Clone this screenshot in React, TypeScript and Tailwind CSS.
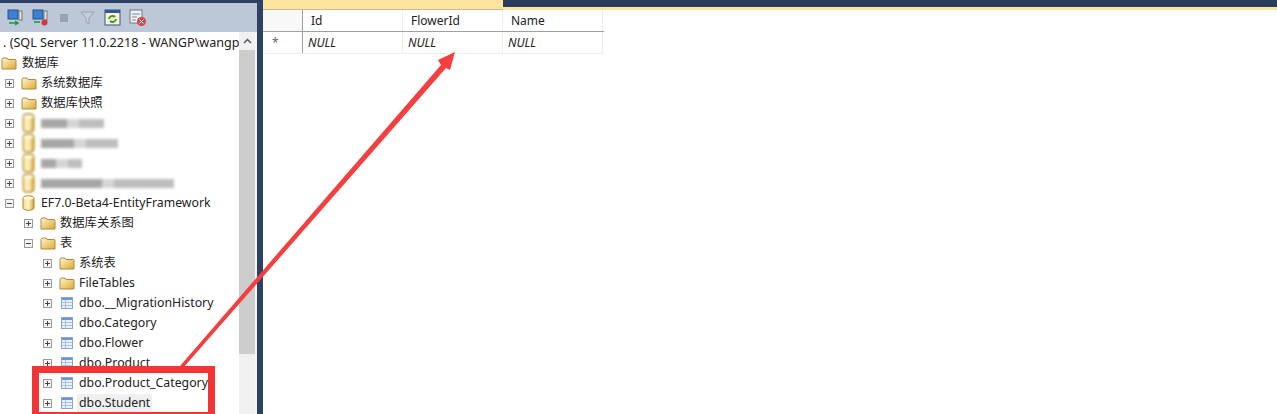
import React from 'react';

const font = { fontFamily: '"Noto Sans", "Noto Sans CJK SC", sans-serif' };

const Box = ({ open }: { open?: boolean }) => (
  <svg width="9" height="9" viewBox="0 0 9 9" className="shrink-0">
    <rect x="0.5" y="0.5" width="8" height="8" fill="#f4f4f4" stroke="#9a9a9a" />
    <path d={open ? 'M2 4.5h5' : 'M2 4.5h5M4.5 2v5'} stroke="#444" />
  </svg>
);

const Folder = () => (
  <svg width="16" height="13" viewBox="0 0 16 13" className="shrink-0">
    <defs>
      <linearGradient id="fold" x1="0" y1="0" x2="1" y2="1">
        <stop offset="0" stopColor="#fff6d2" />
        <stop offset="1" stopColor="#dfa92c" />
      </linearGradient>
    </defs>
    <path d="M1 2.5 2 1h4l1 1.5h7.500a1 1 0 0 1 .5 1V12H1z" fill="url(#fold)" stroke="#a98b47" />
  </svg>
);

const Db = ({ blur }: { blur?: boolean }) => (
  <svg width="13" height="16" viewBox="0 0 13 16" className={blur ? 'shrink-0 scale-y-125 blur-[1px]' : 'shrink-0'}>
    <defs>
      <linearGradient id="dbg" x1="0" y1="0" x2="1" y2="0">
        <stop offset="0" stopColor="#f7dc8f" />
        <stop offset="0.5" stopColor="#fff3c8" />
        <stop offset="1" stopColor="#d9a32c" />
      </linearGradient>
    </defs>
    <path d="M1 3c0-3 11-3 11 0v10c0 3-11 3-11 0z" fill="url(#dbg)" stroke="#a8872f" />
    <ellipse cx="6.500" cy="3" rx="5" ry="1.500" fill="#fff8dc" />
  </svg>
);

const TableIcon = () => (
  <svg width="12" height="12" viewBox="0 0 12 12" className="shrink-0">
    <rect x="0.500" y="0.500" width="11" height="11" fill="#eaf1fa" stroke="#8aa6cc" />
    <rect x="1" y="1" width="10" height="2" fill="#6f95cb" />
    <path d="M1 5.500h10M1 8.500h10M4.500 3v8" stroke="#a9c2e2" />
  </svg>
);

const Row = ({ depth, open, selected, icon, children }: { depth: number; open?: boolean; selected?: boolean; icon: React.ReactNode; children: React.ReactNode }) => (
  <div className="flex h-5 items-center">
    <div className={depth === 1 ? 'w-[5px]' : depth === 2 ? 'w-[24px]' : 'w-[43px]'} />
    <Box open={open} />
    <div className="ml-[6px] flex w-[17px] justify-center">{icon}</div>
    <div className={selected ? 'ml-[2px] whitespace-nowrap bg-[#f0f0f0] px-[2px] text-[12.300px] text-[#222]' : 'ml-[4px] whitespace-nowrap text-[12.300px] text-[#222]'}>{children}</div>
  </div>
);

const Smear = ({ w }: { w: number }) => (
  <div className="flex blur-[1.500px]" style={{ width: w }}>
    <div className="h-[9px] flex-1 bg-[#a6a6a6]" />
    <div className="h-[9px] w-3 bg-[#d6d6d6]" />
    <div className="h-[9px] flex-1 bg-[#bdbdbd]" />
  </div>
);

const Toolbar = () => (
  <div className="flex h-[29px] items-center gap-[8px] bg-[#bcc7d8] pl-[7px]">
    <svg width="17" height="17" viewBox="0 0 17 17">
      <rect x="1" y="1" width="10" height="9" fill="#3d7fd0" stroke="#23568f" />
      <rect x="12" y="2" width="3" height="9" fill="#e6e6e6" stroke="#777" />
      <path d="M2 14h9M8 12l3 2-3 2" stroke="#1d9a3a" strokeWidth="1.500" fill="none" />
    </svg>
    <svg width="17" height="17" viewBox="0 0 17 17">
      <rect x="1" y="1" width="10" height="9" fill="#3d7fd0" stroke="#23568f" />
      <rect x="12" y="2" width="3" height="9" fill="#e6e6e6" stroke="#777" />
      <path d="M2 13h6" stroke="#1d9a3a" strokeWidth="1.500" />
      <circle cx="12.500" cy="13.500" r="3" fill="#d8333a" />
    </svg>
    <div className="ml-[3px] h-[8px] w-[8px] bg-[#98a2af]" />
    <svg width="17" height="17" viewBox="0 0 17 17" className="ml-[3px]">
      <path d="M2 3h13l-5 6v6l-3-2V9z" fill="#c7ced8" stroke="#98a2af" />
    </svg>
    <svg width="17" height="17" viewBox="0 0 17 17">
      <rect x="1" y="1" width="15" height="15" fill="#f6f3d8" stroke="#34578c" />
      <rect x="1" y="1" width="15" height="3" fill="#34578c" />
      <path d="M5 10a3.500 3.500 0 0 1 6-2M12 10a3.500 3.500 0 0 1-6 2" stroke="#3f9a22" strokeWidth="2" fill="none" />
    </svg>
    <svg width="18" height="18" viewBox="0 0 18 18">
      <rect x="1" y="1" width="12" height="13" fill="#eef1f5" stroke="#6f7a88" />
      <path d="M3 5h8M3 8h5M3 11h4" stroke="#7d8896" />
      <circle cx="12.500" cy="12.500" r="4.500" fill="#d9434a" />
      <path d="M10.500 10.500l4 4M14.500 10.500l-4 4" stroke="#fff" />
    </svg>
  </div>
);

const Scrollbar = () => (
  <div className="flex w-4 shrink-0 flex-col bg-[#f0f0f0]">
    <div className="flex h-[18px] items-center justify-center">
      <svg width="9" height="6" viewBox="0 0 9 6">
        <path d="M1 5l3.500-3.500L8 5" stroke="#555" strokeWidth="1.500" fill="none" />
      </svg>
    </div>
    <div className="h-[304px] bg-[#cdcdcd]" />
  </div>
);

const Tree = () => (
  <div className="flex min-h-0 flex-1 overflow-hidden bg-white">
    <div className="w-[239px] shrink-0 overflow-hidden pt-[1px]">
      <div className="flex h-5 items-center whitespace-nowrap pl-[3px] text-[12.600px] text-[#222]">. (SQL Server 11.0.2218 - WANGP\wangp</div>
      <div className="flex h-5 items-center pl-[1px] text-[12.300px] text-[#222]">
        <Folder />
        <span className="ml-[5px]">数据库</span>
      </div>
      <Row depth={1} icon={<Folder />}>系统数据库</Row>
      <Row depth={1} icon={<Folder />}>数据库快照</Row>
      <Row depth={1} icon={<Db blur />}><Smear w={63} /></Row>
      <Row depth={1} icon={<Db blur />}><Smear w={77} /></Row>
      <Row depth={1} icon={<Db blur />}><Smear w={41} /></Row>
      <Row depth={1} icon={<Db blur />}><Smear w={133} /></Row>
      <Row depth={1} open icon={<Db />}>EF7.0-Beta4-EntityFramework</Row>
      <Row depth={2} icon={<Folder />}>数据库关系图</Row>
      <Row depth={2} open icon={<Folder />}>表</Row>
      <Row depth={3} icon={<Folder />}>系统表</Row>
      <Row depth={3} icon={<Folder />}>FileTables</Row>
      <Row depth={3} icon={<TableIcon />}>dbo.__MigrationHistory</Row>
      <Row depth={3} icon={<TableIcon />}>dbo.Category</Row>
      <Row depth={3} icon={<TableIcon />}>dbo.Flower</Row>
      <Row depth={3} icon={<TableIcon />}>dbo.Product</Row>
      <Row depth={3} icon={<TableIcon />}>dbo.Product_Category</Row>
      <Row depth={3} selected icon={<TableIcon />}>dbo.Student</Row>
    </div>
    <Scrollbar />
    <div className="w-[2px] shrink-0 bg-[#f4f6f9]" />
  </div>
);

const columns = ['Id', 'FlowerId', 'Name'];

const Grid = () => (
  <div className="w-[341px] text-[12px] text-[#222]">
    <div className="flex h-[22px] border-b border-[#a0a0a0] bg-white">
      <div className="w-[40px] border-r border-[#a0a0a0] bg-[#f8f8f8]" />
      {columns.map(c => (
        <div key={c} className="flex w-[100px] items-center border-r border-[#eeeeee] pl-[8px]">{c}</div>
      ))}
    </div>
    <div className="flex h-[22px] border-b border-[#eeeeee]">
      <div className="flex w-[40px] items-center border-r border-[#a0a0a0] pl-[9px] text-[#666]">*</div>
      {columns.map(c => (
        <div key={c} className="flex w-[100px] items-center border-r border-[#eeeeee] pl-[5px] italic">NULL</div>
      ))}
    </div>
  </div>
);

export default function App() {
  return (
    <div className="relative flex h-[414px] w-[1277px] overflow-hidden bg-white" style={font}>
      <div className="flex w-[257px] shrink-0 flex-col">
        <div className="h-[3px] bg-[#2d4065]" />
        <Toolbar />
        <Tree />
      </div>
      <div className="w-[6px] shrink-0 bg-[#2d4065]" />
      <div className="flex min-w-0 flex-1 flex-col">
        <div className="flex h-[10px]">
          <div className="w-[240px] border-b border-[#c9b98a] bg-[#fde5a0]" />
          <div className="flex-1 border-b-[3px] border-[#fde5a0] bg-[#2b3d5f]" />
        </div>
        <Grid />
      </div>
      {/* red annotation drawn on top of the screenshot */}
      <svg width="1277" height="414" viewBox="0 0 1277 414" className="pointer-events-none absolute left-0 top-0">
        <path d="M180 366 441 65 438 60 455 52 450 70 446 68 183 368z" fill="#f33f3f" />
      </svg>
      <div className="pointer-events-none absolute left-[32px] top-[366px] h-[53px] w-[183px] border-[7px] border-[#f33535]" />
    </div>
  );
}
